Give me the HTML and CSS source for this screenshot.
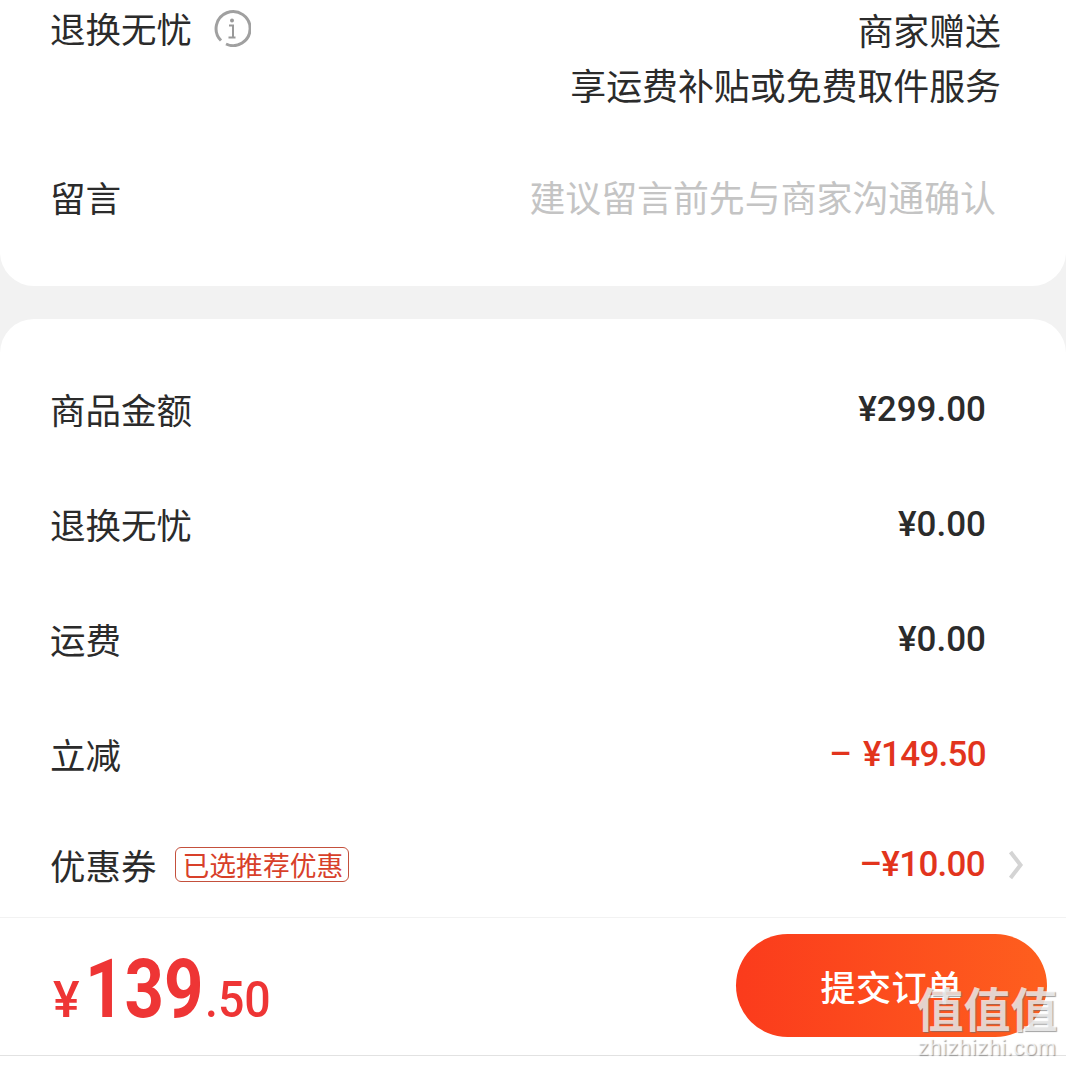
FILE: index.html
```html
<!DOCTYPE html>
<html lang="zh-CN">
<head>
    <meta charset="UTF-8">
    <title>确认订单</title>
    <link rel="stylesheet" href="styles.css">
</head>
<body>
<div class="page">
    <div class="card card-top">
        <div class="service">
            <div class="service-name">
                <span>退换无忧</span>
                <svg class="info" width="38" height="38" viewBox="0 0 38 38">
                    <path d="M8 31.5A17 17 0 1 1 13 35" fill="none" stroke="#a0a0a0" stroke-width="3"/>
                    <circle cx="19" cy="11.5" r="2" fill="#999"/>
                    <path d="M16 16.5h4v11.5M15.5 28.5h7" fill="none" stroke="#999" stroke-width="2"/>
                </svg>
            </div>
            <div class="service-desc">
                <div>商家赠送</div>
                <div>享运费补贴或免费取件服务</div>
            </div>
        </div>
        <div class="note">
            <span>留言</span>
            <span class="note-hint">建议留言前先与商家沟通确认</span>
        </div>
    </div>

    <div class="card card-price">
        <div class="row"><span class="label">商品金额</span><span class="num">¥299.00</span></div>
        <div class="row"><span class="label">退换无忧</span><span class="num">¥0.00</span></div>
        <div class="row"><span class="label">运费</span><span class="num">¥0.00</span></div>
        <div class="row"><span class="label">立减</span><span class="num red tight"><span class="minus">–</span>¥149.50</span></div>
        <div class="row row-coupon">
            <div class="coupon-left">
                <span>优惠券</span>
                <span class="tag">已选推荐优惠</span>
            </div>
            <div class="coupon-right">
                <span class="num red tight">–¥10.00</span>
                <svg class="arrow" width="16" height="30" viewBox="0 0 16 30">
                    <path d="M2.5 2l10 13-10 13" fill="none" stroke="#d4d4d4" stroke-width="4"/>
                </svg>
            </div>
        </div>
    </div>

    <div class="bar">
        <div class="total">
            <span class="total-sign">¥</span><span class="total-int">139</span><span class="total-dec">.50</span>
        </div>
        <div class="submit">提交订单</div>
    </div>
</div>

<div class="mark">
    <div class="mark-big">值值值</div>
    <div class="mark-small">zhizhizhi.com</div>
</div>
</body>
</html>
```

FILE: styles.css
```css
html, body {
    margin: 0;
    padding: 0;
    background-color: #fff;
}

body {
    font-family: "Noto Sans CJK SC", "Noto Sans", sans-serif;
    color: #2b2b2b;
    font-size: 35.5px;
    position: relative;
    height: 1066px;
    overflow: hidden;
}

.page {
    background-color: #f2f2f2;
}

.card {
    background-color: #fff;
}

.card-top {
    height: 286px;
    padding: 0 65px 0 50px;
    box-sizing: border-box;
    border-radius: 0 0 34px 34px;
}

.service {
    display: flex;
    justify-content: space-between;
    padding-top: 2px;
}

.service-name {
    display: flex;
    align-items: center;
    gap: 21px;
    height: 50px;
}

.info {
    margin-top: 2px;
}

.service-desc {
    text-align: right;
    font-size: 35.9px;
    line-height: 55px;
}

.note {
    display: flex;
    justify-content: space-between;
    align-items: center;
    height: 60px;
    margin-top: 54px;
    padding-right: 5px;
}

.note-hint {
    color: #c4c4c4;
    font-size: 35.9px;
}

.card-price {
    margin-top: 33px;
    padding: 33px 80px 0 50px;
    border-radius: 34px 34px 0 0;
}

.row {
    display: flex;
    justify-content: space-between;
    align-items: center;
    height: 115px;
}

.label {
    padding-bottom: 3px;
}

.num {
    font-family: Roboto, "Liberation Sans", sans-serif;
    font-weight: 500;
    font-size: 35px;
}

.red {
    color: #e2341d;
}

.tight {
    letter-spacing: -0.7px;
}

.minus {
    margin-right: 12px;
}

.row-coupon {
    height: 105px;
    margin-right: -38px;
}

.coupon-left {
    display: flex;
    align-items: center;
    gap: 18px;
}

.tag {
    color: #d8402a;
    border: 1px solid #c4503c;
    border-radius: 6px;
    font-size: 26.8px;
    line-height: 33px;
    padding: 0 5px 0 7px;
}

.coupon-right {
    display: flex;
    align-items: center;
    gap: 23px;
}

.bar {
    display: flex;
    justify-content: space-between;
    height: 139px;
    padding: 16px 19px 0 51px;
    box-sizing: border-box;
    background-color: #fff;
    border-top: 1px solid #f2f2f2;
    border-bottom: 1px solid #e2e2e2;
}

.total {
    color: #ee3535;
    font-family: Roboto, "Liberation Sans", sans-serif;
    font-weight: 500;
    height: 88px;
    display: flex;
    align-items: baseline;
    padding-top: 11px;
}

.total-sign {
    font-size: 50px;
    margin: 0 5px 0 2px;
}

/* the reference digits are narrower than Roboto */
.total-int {
    font-size: 82px;
    font-weight: 700;
    line-height: 88px;
    transform: scaleX(0.84);
    transform-origin: left;
    margin-right: -21px;
}

.total-dec {
    font-size: 50px;
    transform: scaleX(0.93);
    transform-origin: left;
}

.submit {
    width: 311px;
    height: 103px;
    border-radius: 52px;
    background: linear-gradient(90deg, #fb3b1c, #fe5f1e);
    color: #fff;
    font-size: 35px;
    font-weight: 500;
    display: flex;
    align-items: center;
    justify-content: center;
    letter-spacing: 0.5px;
}

/* watermark sits over the button corner */
.mark {
    position: absolute;
    left: 915px;
    top: 981px;
    width: 144px;
    text-align: center;
    color: rgba(255, 255, 255, 0.72);
    text-shadow: 1px 1px 1px rgba(110, 110, 110, 0.65);
}

.mark-big {
    font-size: 47px;
    line-height: 52px;
    font-weight: 700;
}

.mark-small {
    font-family: "Liberation Sans", sans-serif;
    font-size: 22px;
    line-height: 30px;
    letter-spacing: 0.5px;
}
```
